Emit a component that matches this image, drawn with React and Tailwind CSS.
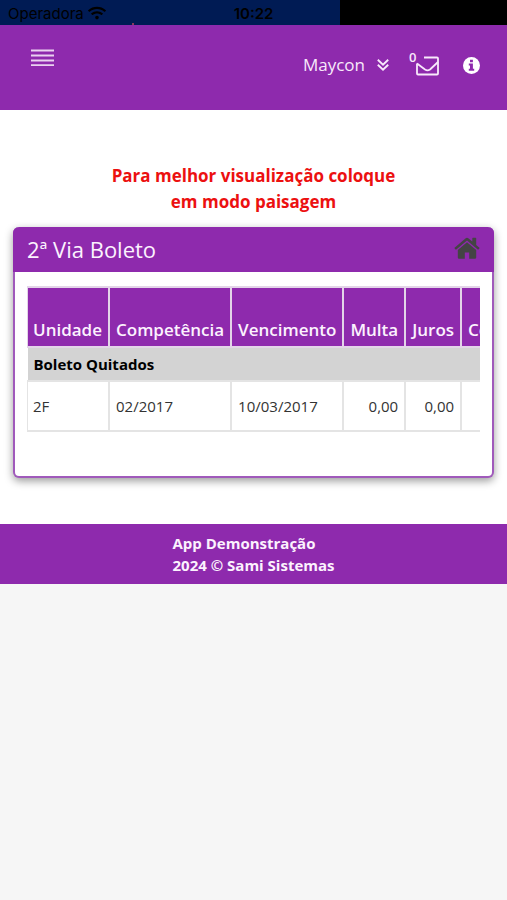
import { FaWifi } from 'react-icons/fa'

const columns = [
  { id: 'unidade', label: 'Unidade', numeric: false },
  { id: 'competencia', label: 'Competência', numeric: false },
  { id: 'vencimento', label: 'Vencimento', numeric: false },
  { id: 'multa', label: 'Multa', numeric: true },
  { id: 'juros', label: 'Juros', numeric: true },
  { id: 'correcao', label: 'Correção', numeric: true },
]

const boletos = [
  {
    unidade: '2F',
    competencia: '02/2017',
    vencimento: '10/03/2017',
    multa: '0,00',
    juros: '0,00',
    correcao: '',
  },
]

function StatusBar() {
  return (
    <div className="relative flex h-[25px] items-center bg-black px-2 font-['Inter','Liberation_Sans',sans-serif] text-[15px] text-black">
      <div className="absolute inset-y-0 left-0 w-[67%] bg-[#001b54]" />
      <div className="absolute bottom-0 left-[26%] h-0.5 w-0.5 bg-[#8a3a5c]" />
      <div className="relative flex flex-1 items-center gap-1 pt-1">
        <span>Operadora</span>
        <FaWifi className="mb-1 h-[18px] w-[18px]" />
      </div>
      <span className="relative pt-1 font-semibold">10:22</span>
      <div className="flex-1" />
    </div>
  )
}

function Header() {
  return (
    <header className="flex h-[85px] items-start justify-between bg-[#8e2aad] pl-[31px] pr-[27px] text-white">
      <button type="button" aria-label="Menu" className="mt-6">
        <svg viewBox="0 0 23 18" className="h-[18px] w-[23px]" stroke="#ead2f0" strokeWidth="1.8">
          <path d="M0 1.5h23M0 6.5h23M0 11.5h23M0 16.2h23" />
        </svg>
      </button>

      <div className="mt-6 flex h-8 items-center">
        <button type="button" className="flex items-center gap-3 text-[17px] text-[#f8e9fb]">
          Maycon
          <svg viewBox="0 0 12 12" className="h-3 w-3" fill="none" stroke="currentColor" strokeWidth="1.9">
            <path d="M.8 .8L6 5.600 11.200 .8M.8 5.800L6 10.600l5.200-4.800" />
          </svg>
        </button>
        <button type="button" aria-label="Mensagens" className="relative ml-[26px] h-6 w-6">
          <svg viewBox="0 0 24 24" className="h-6 w-6" fill="none" stroke="#f8e9fb" strokeWidth="1.8" strokeLinejoin="round">
            <path d="M9 4.500H22q1 0 1 1V20.500q0 1-1 1H3q-1 0-1-1V10.500" />
            <path d="M2 10.500l8 6q2.500 1.600 5 0l8-7.500" />
          </svg>
          <span className="absolute -left-1.5 -top-1 text-[13px] font-semibold leading-4 text-[#f8e9fb]">0</span>
        </button>
        <button type="button" aria-label="Informações" className="ml-6">
          <svg viewBox="0 0 17 17" className="h-[17px] w-[17px]">
            <circle cx="8.500" cy="8.500" r="8.500" fill="#fff" />
            <path d="M7 2.800h2.900v2.400H7zM5.800 6.600h4.100v5.200h1.300v2H5.800v-2H7V8.600H5.800z" fill="#8e2aad" />
          </svg>
        </button>
      </div>
    </header>
  )
}

function HomeIcon() {
  return (
    <svg viewBox="0 0 26 22" className="h-[22px] w-[26px]" fill="currentColor">
      <path d="M13 5.200l9.200 7.700V20.500q0 1.300-1.300 1.300h-5.700v-6.300h-4.400v6.300H5.100q-1.300 0-1.300-1.300v-7.600z" />
      <path d="M.3 10.900L11.700 1.200q1.300-1 2.600 0l4 3.400V1.300q0-.6.6-.6h2.700q.6 0 .6.6v6.600l3.500 3-1.200 1.500q-.4.3-.8 0L13 3.500 2.300 12.400q-.4.3-.8 0z" />
    </svg>
  )
}

function BoletoTable() {
  return (
    <div className="overflow-hidden">
      <table className="border-collapse whitespace-nowrap">
        <thead>
          <tr className="h-[60px] bg-[#8e2aad] text-[17px] leading-6 text-[#fcf2fe]">
            {columns.map(col => (
              <th
                key={col.id}
                scope="col"
                className="border-2 border-[#e3d4e8] px-1.5 pb-1 text-left align-bottom font-semibold first:border-l first:pl-[5px]"
              >
                {col.label}
              </th>
            ))}
          </tr>
        </thead>
        <tbody>
          <tr className="h-[34px] bg-[#d3d3d3] text-[15px] text-black">
            <th scope="rowgroup" colSpan={columns.length} className="px-1.5 text-left font-bold">
              Boleto Quitados
            </th>
          </tr>
          {boletos.map(boleto => (
            <tr key={boleto.competencia} className="h-[50px] text-[15px] text-[#333]">
              {columns.map(col => (
                <td
                  key={col.id}
                  className={`border-2 border-[#e4e4e4] px-1.5 first:border-l first:pl-[5px] ${col.numeric ? 'text-right' : 'text-left'}`}
                >
                  {boleto[col.id]}
                </td>
              ))}
            </tr>
          ))}
        </tbody>
      </table>
    </div>
  )
}

export default function App() {
  return (
    <div className="min-h-screen bg-[#f6f6f6] font-['Open_Sans','Noto_Sans',sans-serif]">
      <StatusBar />
      <Header />

      <main className="bg-white px-[13px] pb-[46px] pt-[53px]">
        <p className="mx-auto mb-3 max-w-[300px] text-center text-[17px] font-bold leading-[26px] text-[#ec1010]">
          Para melhor visualização coloque em modo paisagem
        </p>

        <section className="rounded-md border-2 border-t-0 border-[#a05abb] bg-white shadow-[0_3px_8px_rgba(0,0,0,0.4)]">
          <div className="-mx-0.5 flex h-[45px] items-center justify-between rounded-t-md bg-[#8e2aad] px-3.5">
            <h1 className="text-[22px] text-[#fcf2fe]">2ª Via Boleto</h1>
            <a href="#inicio" aria-label="Início" className="mb-1 text-[#444]">
              <HomeIcon />
            </a>
          </div>
          <div className="px-3 pb-11 pt-3.5">
            <BoletoTable />
          </div>
        </section>
      </main>

      <footer className="flex h-[60px] items-center justify-center bg-[#8e2aad] text-[15px] font-bold leading-[22px] text-[#fcf2fe]">
        <p>
          App Demonstração
          <br />
          2024 © Sami Sistemas
        </p>
      </footer>
    </div>
  )
}
